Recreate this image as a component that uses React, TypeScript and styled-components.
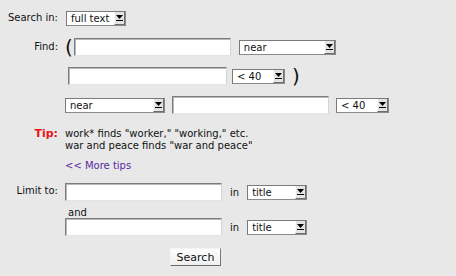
import React from "react";
import styled, { createGlobalStyle } from "styled-components";

const GlobalStyle = createGlobalStyle`
  html, body {
    margin: 0;
    padding: 0;
    background: #e8e8e8;
  }
  body {
    font-family: "DejaVu Sans", Verdana, sans-serif;
    font-size: 10px;
    color: #111;
  }
`;

const Form = styled.form`
  display: flex;
  flex-direction: column;
  padding-top: 11px;
`;

const Row = styled.div<{ $top?: number }>`
  display: flex;
  align-items: flex-start;
  margin-top: ${(p) => p.$top ?? 0}px;
`;

const Label = styled.div<{ $red?: boolean; $pad?: number }>`
  width: 58px;
  flex: none;
  text-align: right;
  padding-top: ${(p) => p.$pad ?? 2}px;
  color: ${(p) => (p.$red ? "#e8141a" : "#111")};
  font-weight: ${(p) => (p.$red ? "bold" : "normal")};
  font-size: ${(p) => (p.$red ? "11px" : "10px")};
`;

const Field = styled.div<{ $indent?: number; $gap?: number }>`
  display: flex;
  align-items: center;
  gap: ${(p) => p.$gap ?? 7}px;
  margin-left: ${(p) => 7 + (p.$indent ?? 0)}px;
`;

const TextInput = styled.input`
  box-sizing: border-box;
  width: ${(p) => p.width ?? 157}px;
  height: 18px;
  margin: 0;
  padding: 1px 3px;
  background: #fff;
  border: 1px solid;
  border-color: #7c7c7c #d4d4d4 #e4e4e4 #7c7c7c;
  box-shadow: inset 1px 1px 0 #b8b8b8;
  font: inherit;
`;

const SelectWrap = styled.span<{ $w: number }>`
  position: relative;
  display: inline-block;
  width: ${(p) => p.$w}px;
  height: 15px;
`;

const NativeSelect = styled.select`
  appearance: none;
  -webkit-appearance: none;
  box-sizing: border-box;
  width: 100%;
  height: 100%;
  margin: 0;
  padding: 0 14px 0 4px;
  background: #fff;
  border: 1px solid;
  border-color: #7a7a7a #8a8a8a #8a8a8a #7a7a7a;
  border-radius: 0;
  font: inherit;
  color: #111;
  outline: none;
`;

const ArrowBox = styled.span`
  position: absolute;
  top: 1px;
  right: 1px;
  width: 11px;
  height: 13px;
  box-sizing: border-box;
  background: #e4e4e4;
  border-right: 1px solid #6e6e6e;
  border-bottom: 1px solid #6e6e6e;
  border-left: 1px solid #fafafa;
  display: flex;
  align-items: center;
  justify-content: center;
  pointer-events: none;
`;

const Paren = styled.span`
  font-family: "DejaVu Sans", sans-serif;
  font-size: 20px;
  line-height: 18px;
  color: #111;
`;

const TipText = styled.div`
  line-height: 12px;
  padding-top: 1px;
`;

const MoreLink = styled.a`
  color: #5a2a9e;
  text-decoration: none;
  cursor: pointer;
`;

const Word = styled.span<{ $dx?: number }>`
  margin-left: ${(p) => p.$dx ?? 0}px;
`;

const ButtonRow = styled.div`
  display: flex;
  padding-left: 170px;
  margin-top: 12px;
`;

const SearchButton = styled.button`
  box-sizing: border-box;
  width: 51px;
  height: 18px;
  margin: 0;
  padding: 0;
  font: inherit;
  font-size: 11px;
  color: #111;
  background: linear-gradient(#fdfdfd, #f0f0f0);
  border: 1px solid;
  border-color: #f4f4f4 #7a7a7a #6a6a6a #f4f4f4;
`;

const Arrow = () => (
  <svg width="7" height="6" viewBox="0 0 7 6">
    <path d="M0 0h7L3.5 4z" fill="#000" />
    <rect x="0" y="5" width="7" height="1" fill="#000" />
  </svg>
);

const Select: React.FC<{ w: number; options: string[] }> = ({ w, options }) => (
  <SelectWrap $w={w}>
    <NativeSelect defaultValue={options[0]}>
      {options.map((o) => (
        <option key={o}>{o}</option>
      ))}
    </NativeSelect>
    <ArrowBox>
      <Arrow />
    </ArrowBox>
  </SelectWrap>
);

const nearOpts = ["near", "and", "or", "not"];
const distOpts = ["< 40", "< 20", "< 10", "< 5"];
const fieldOpts = ["title", "author", "subject", "full text"];

export default function App() {
  return (
    <>
      <GlobalStyle />
      <Form onSubmit={(e) => e.preventDefault()}>
        <Row>
          <Label $pad={1}>Search in:</Label>
          <Field $indent={1}>
            <Select w={60} options={["full text", "title", "author"]} />
          </Field>
        </Row>

        <Row $top={12}>
          <Label $pad={3}>Find:</Label>
          <Field $gap={1}>
            <Paren>(</Paren>
            <TextInput width={157} />
            <Word $dx={7}>
              <Select w={97} options={nearOpts} />
            </Word>
          </Field>
        </Row>

        <Row $top={11}>
          <Label />
          <Field $indent={3} $gap={5}>
            <TextInput width={159} />
            <Select w={53} options={distOpts} />
            <Word $dx={2}>
              <Paren>)</Paren>
            </Word>
          </Field>
        </Row>

        <Row $top={11}>
          <Label />
          <Field>
            <Select w={100} options={nearOpts} />
            <TextInput width={157} />
            <Select w={53} options={distOpts} />
          </Field>
        </Row>

        <Row $top={13}>
          <Label $red $pad={0}>Tip:</Label>
          <Field>
            <TipText>
              work* finds "worker," "working," etc.
              <br />
              war and peace finds "war and peace"
            </TipText>
          </Field>
        </Row>

        <Row $top={8}>
          <Label />
          <Field>
            <MoreLink>&lt;&lt; More tips</MoreLink>
          </Field>
        </Row>

        <Row $top={12}>
          <Label $pad={2}>Limit to:</Label>
          <Field $gap={8}>
            <TextInput width={157} />
            <span>in</span>
            <Select w={60} options={fieldOpts} />
          </Field>
        </Row>

        <Row $top={6}>
          <Label $pad={0} />
          <Field $indent={3}>
            <span>and</span>
          </Field>
        </Row>

        <Row $top={0}>
          <Label />
          <Field $gap={8}>
            <TextInput width={157} />
            <span>in</span>
            <Select w={60} options={fieldOpts} />
          </Field>
        </Row>

        <ButtonRow>
          <SearchButton type="submit">Search</SearchButton>
        </ButtonRow>
      </Form>
    </>
  );
}
